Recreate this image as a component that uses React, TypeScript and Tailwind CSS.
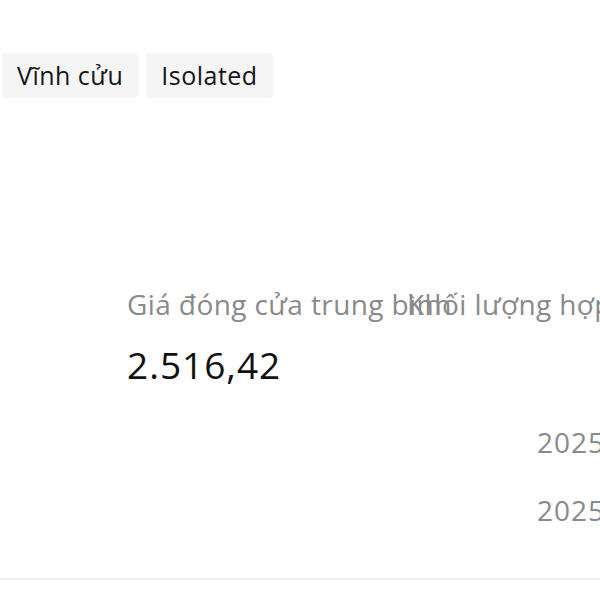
export default function App() {
  return (
    <div className="w-[600px] h-[600px] overflow-hidden bg-white" style={{ fontFamily: '"Open Sans", Lato, sans-serif' }}>
      <div className="flex gap-2 pl-[2px] pt-[53px]">
        <span className="rounded-[4px] bg-[#f5f5f5] px-[15px] h-[45px] flex items-center text-[25px] tracking-[0.5px] text-[#161616]">Vĩnh cửu</span>
        <span className="rounded-[4px] bg-[#f5f5f5] px-[15px] h-[45px] flex items-center text-[25px] tracking-[0.5px] text-[#161616]">Isolated</span>
      </div>

      <div className="flex pl-[127px] pt-[188px]">
        <div className="w-[280px] shrink-0">
          <div className="whitespace-nowrap text-[28px] leading-[36px] tracking-[0.4px] text-[#8a8a8a]">Giá đóng cửa trung bình</div>
          <div className="mt-[21px] whitespace-nowrap text-[37px] leading-[44px] tracking-[1px] text-[#111111]">2.516,42</div>
        </div>
        <div className="w-[280px] shrink-0">
          <div className="whitespace-nowrap text-[28px] leading-[36px] tracking-[0.4px] text-[#8a8a8a]">Khối lượng hợp đồng</div>
        </div>
      </div>

      <div className="pl-[537px] pt-[37px] flex flex-col gap-[32px]">
        <div className="whitespace-nowrap text-[28px] leading-[36px] tracking-[1px] text-[#8a8a8a]">2025-01-01</div>
        <div className="whitespace-nowrap text-[28px] leading-[36px] tracking-[1px] text-[#8a8a8a]">2025-01-01</div>
      </div>

      <div className="mt-[50px] h-[2px] bg-[#f0f0f0]" />
    </div>
  )
}
